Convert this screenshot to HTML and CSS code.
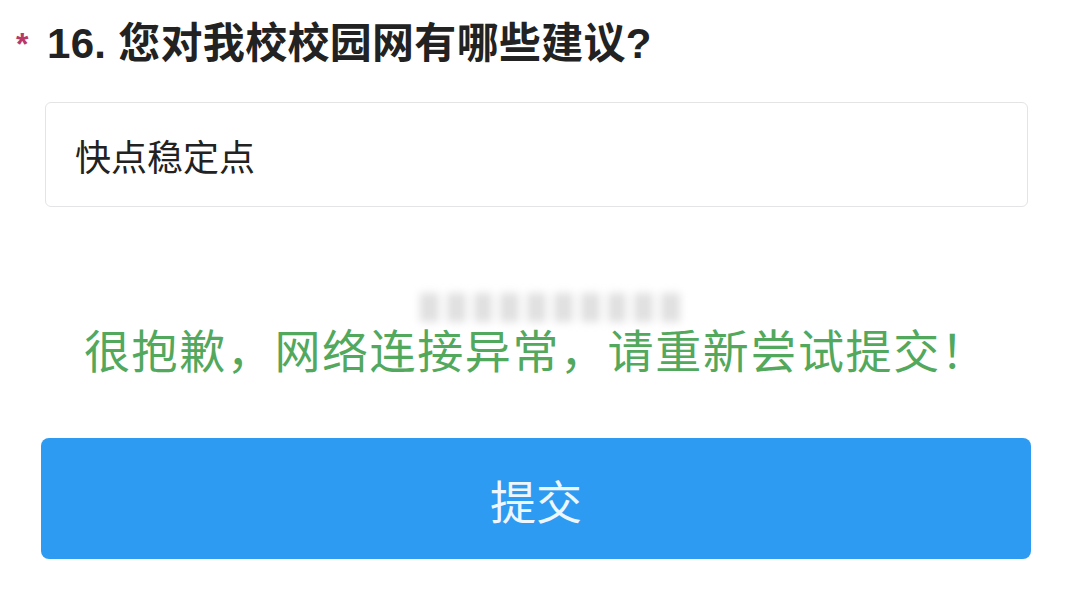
FILE: index.html
```html
<!DOCTYPE html>
<html>
<head>
    <title>问卷</title>
    <meta charset="UTF-8">
    <meta name="viewport" content="width=device-width, initial-scale=1.0">
    <link rel="stylesheet" href="styles.css">
</head>
<body>
    <div class="question">
        <span class="required">*</span>
        <span class="title">16. 您对我校校园网有哪些建议?</span>
    </div>

    <div class="answer">快点稳定点</div>

    <div class="toast-blur">
        <span></span><span></span><span></span><span></span><span></span>
        <span></span><span></span><span></span><span></span><span></span>
    </div>

    <p class="error">很抱歉，网络连接异常，请重新尝试提交！</p>

    <button class="submit" type="button">提交</button>
</body>
</html>
```

FILE: styles.css
```css
body {
    margin: 0;
    background: #fff;
    font-family: "Liberation Sans", "Noto Sans CJK SC", sans-serif;
}
.question {
    display: flex;
    align-items: center;
    padding: 10px 0 0 16px;
    height: 58px;
}
.required {
    color: #b8386a;
    font-size: 32px;
    font-weight: bold;
    width: 31px;
    margin-top: 10px;
}
.title {
    font-size: 42px;
    font-weight: bold;
    color: #222;
    letter-spacing: 0.3px;
}
.answer {
    display: flex;
    align-items: center;
    margin: 34px 52px 0 45px;
    height: 103px;
    padding-left: 29px;
    border: 1px solid #e4e4e6;
    border-radius: 6px;
    font-family: "Noto Sans CJK SC", sans-serif;
    font-size: 36px;
    color: #222;
}
.toast-blur {
    display: flex;
    gap: 8px;
    margin: 86px 0 0 420px;
    width: 260px;
    height: 29px;
    filter: blur(4px);
}
.toast-blur span {
    flex: 1;
    background: #e0e0e0;
}
.error {
    margin: -4px 0 0 84px;
    font-family: "Noto Sans CJK SC", sans-serif;
    font-size: 46px;
    line-height: 60px;
    letter-spacing: 1.6px;
    color: #52a85c;
}
.submit {
    display: block;
    margin: 60px 0 0 41px;
    width: 990px;
    height: 121px;
    border: none;
    border-radius: 8px;
    background-color: #2d9bf1;
    color: #eef7ff;
    font-family: "Noto Sans CJK SC", sans-serif;
    font-size: 46px;
}
```
